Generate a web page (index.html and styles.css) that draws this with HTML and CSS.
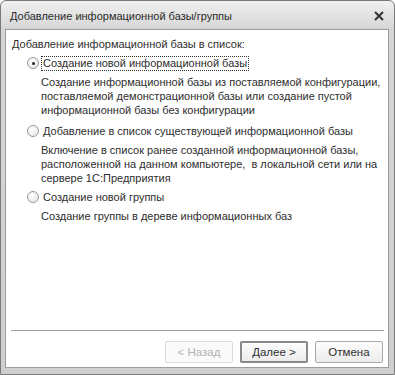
FILE: index.html
```html
<!DOCTYPE html>
<html lang="ru">
<head>
  <meta charset="UTF-8" />
  <meta name="viewport" content="width=device-width, initial-scale=1" />
  <title>Добавление информационной базы/группы</title>
  <link rel="stylesheet" href="styles.css">
</head>
<body>
  <div class="window">
    <div class="titlebar">
      <span class="title">Добавление информационной базы/группы</span>
      <svg class="close" width="10" height="10" viewBox="0 0 10 10">
        <path d="M1 1 L9 9 M9 1 L1 9" stroke="#333" stroke-width="2" />
      </svg>
    </div>

    <div class="client">
      <div class="content">
        <div class="heading">Добавление информационной базы в список:</div>

        <div class="option">
          <div class="option-row">
            <span class="radio checked"></span>
            <span class="label focused">Создание новой информационной базы</span>
          </div>
          <div class="desc">Создание информационной базы из поставляемой конфигурации,<br>поставляемой демонстрационной базы или создание пустой<br>информационной базы без конфигурации</div>
        </div>

        <div class="option">
          <div class="option-row">
            <span class="radio"></span>
            <span class="label">Добавление в список существующей информационной базы</span>
          </div>
          <div class="desc">Включение в список ранее созданной информационной базы,<br>расположенной на данном компьютере,&nbsp; в локальной сети или на<br>сервере 1С:Предприятия</div>
        </div>

        <div class="option last">
          <div class="option-row">
            <span class="radio"></span>
            <span class="label">Создание новой группы</span>
          </div>
          <div class="desc">Создание группы в дереве информационных баз</div>
        </div>
      </div>

      <div class="separator"></div>

      <div class="buttons">
        <button class="btn" disabled>&lt; Назад</button>
        <button class="btn default">Далее &gt;</button>
        <button class="btn">Отмена</button>
      </div>
    </div>
  </div>
</body>
</html>
```

FILE: styles.css
```css
html, body {
  margin: 0;
  padding: 0;
  background: #fff;
}
body {
  font-family: 'Liberation Sans', Arial, sans-serif;
  font-size: 11px;
  color: #2e2e2e;
}
.window {
  width: 395px;
  height: 375px;
  box-sizing: border-box;
  border: 1px solid #7a7a7a;
  border-radius: 6px 6px 0 0;
  background: linear-gradient(#f0f0f0, #d6d6d6 28px, #cfcfcf);
  padding: 0 5px 6px 4px;
  display: flex;
  flex-direction: column;
}
.titlebar {
  height: 28px;
  display: flex;
  align-items: center;
  justify-content: space-between;
  padding: 0 5px 0 5px;
}
.title {
  color: #2a2a2a;
  padding-top: 1px;
}
.close {
  margin-top: 1px;
}
.client {
  flex: 1;
  background: #fff;
  border: 1px solid #9c9c9c;
  display: flex;
  flex-direction: column;
}
.content {
  flex: 1;
  padding: 7px 6px 0 6px;
}
.heading {
  line-height: 14px;
}
.option {
  margin-top: 5px;
}
.option + .option {
  margin-top: 7px;
}
.option.last {
  margin-top: 5px;
}
.option-row {
  display: flex;
  align-items: center;
  height: 14px;
  padding-left: 15px;
  white-space: nowrap;
}
.radio {
  width: 12px;
  height: 12px;
  box-sizing: border-box;
  border: 1px solid #9a9a9a;
  border-radius: 50%;
  background: radial-gradient(circle at 40% 35%, #fff, #e2e2e2);
  margin-right: 2px;
  position: relative;
  flex: none;
}
.radio.checked::after {
  content: '';
  position: absolute;
  left: 3.5px;
  top: 3.5px;
  width: 3px;
  height: 3px;
  border-radius: 50%;
  background: #222;
}
.label {
  line-height: 13px;
  padding: 0 1px;
  border: 1px dotted transparent;
}
.label.focused {
  border-color: #333;
}
.desc {
  margin-top: 5px;
  padding-left: 29px;
  line-height: 14px;
  white-space: nowrap;
}
.separator {
  height: 1px;
  background: #a0a0a0;
  margin: 0 4px 0 5px;
}
.buttons {
  display: flex;
  justify-content: flex-end;
  gap: 7px;
  padding: 10px 5px 4px 0;
}
.btn {
  width: 68px;
  height: 22px;
  font-family: 'Liberation Sans', Arial, sans-serif;
  font-size: 11.5px;
  color: #2e2e2e;
  background: linear-gradient(#fdfdfd, #ececec);
  border: 1px solid #a9a9a9;
  border-radius: 2px;
  padding: 0;
}
.btn.default {
  border: 2px solid #8a8a8a;
}
.btn:disabled {
  color: #b4b4b4;
  border-color: #dcdcdc;
  background: #fafafa;
}
```
